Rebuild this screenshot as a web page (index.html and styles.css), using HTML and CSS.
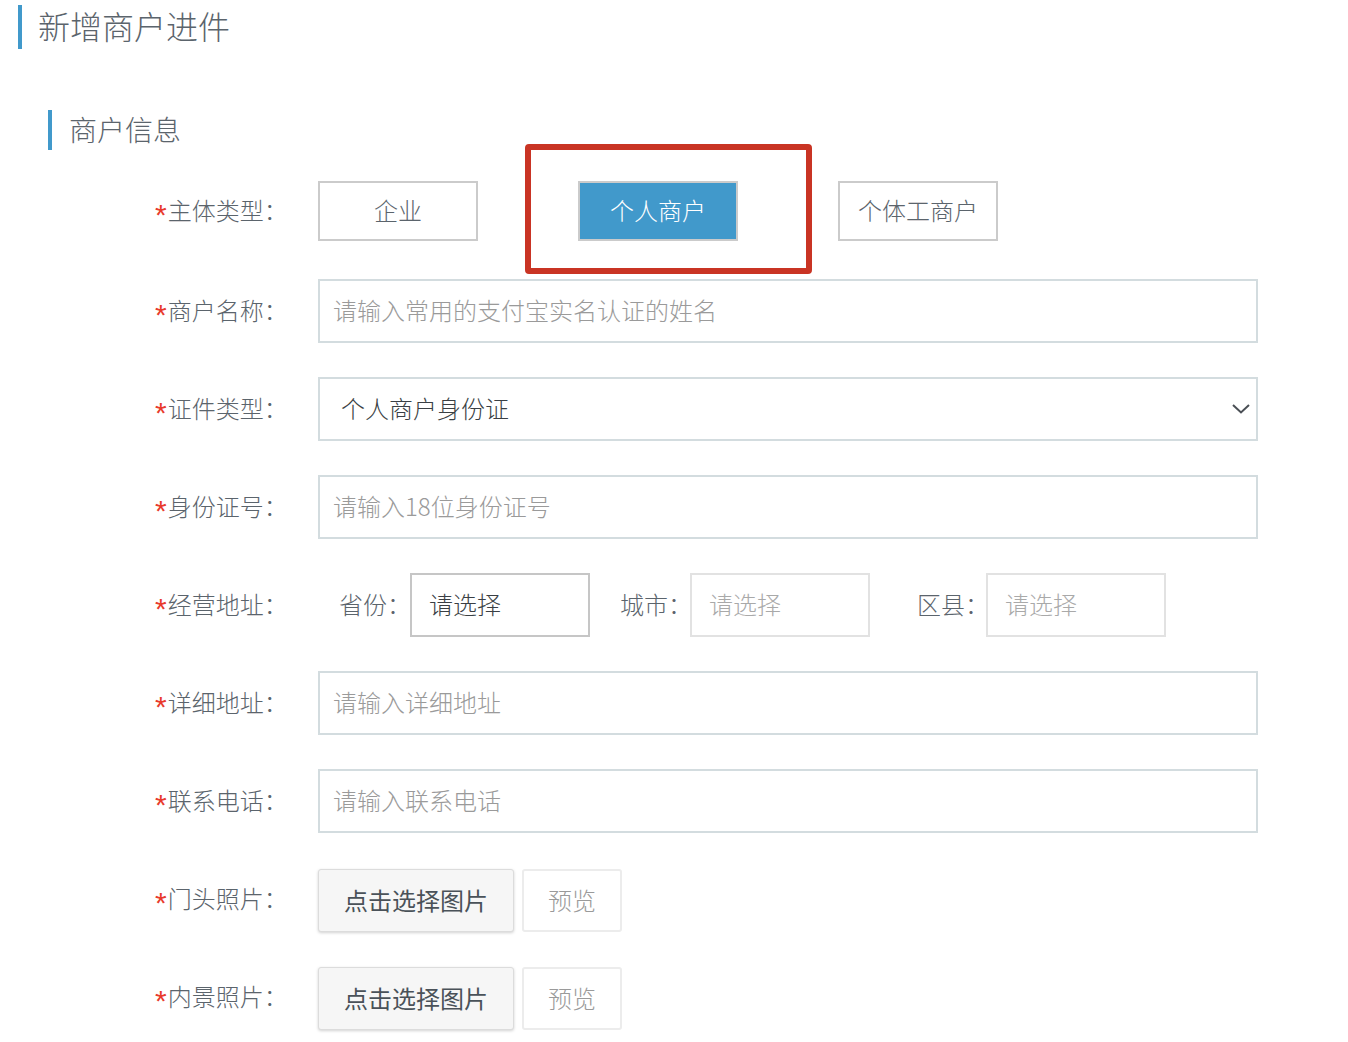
FILE: index.html
```html
<!DOCTYPE html>
<html lang="zh-CN">
<head>
<meta charset="utf-8">
<title>新增商户进件</title>
<link rel="stylesheet" href="styles.css">
</head>
<body>
<div class="page">
  <h1 class="page-title">新增商户进件</h1>
  <h2 class="section-title">商户信息</h2>
  <form class="form">
    <div class="annot"></div>
    <div class="row row-type">
      <label class="label"><span class="req">*</span>主体类型：</label>
      <div class="field type-btns">
        <button type="button" class="type-btn">企业</button>
        <button type="button" class="type-btn active">个人商户</button>
        <button type="button" class="type-btn">个体工商户</button>
      </div>
    </div>
    <div class="row">
      <label class="label"><span class="req">*</span>商户名称：</label>
      <div class="field"><div class="input placeholder">请输入常用的支付宝实名认证的姓名</div></div>
    </div>
    <div class="row">
      <label class="label"><span class="req">*</span>证件类型：</label>
      <div class="field">
        <div class="input select">
          <span>个人商户身份证</span>
          <svg class="chev" width="18" height="10" viewBox="0 0 18 10"><path d="M1 1 L9 8.5 L17 1" fill="none" stroke="#4a4f55" stroke-width="2"/></svg>
        </div>
      </div>
    </div>
    <div class="row">
      <label class="label"><span class="req">*</span>身份证号：</label>
      <div class="field"><div class="input placeholder">请输入18位身份证号</div></div>
    </div>
    <div class="row">
      <label class="label"><span class="req">*</span>经营地址：</label>
      <div class="field addr">
        <div class="addr-group g1"><span class="addr-label">省份：</span><div class="addr-box filled">请选择</div></div>
        <div class="addr-group g2"><span class="addr-label">城市：</span><div class="addr-box">请选择</div></div>
        <div class="addr-group g3"><span class="addr-label">区县：</span><div class="addr-box">请选择</div></div>
      </div>
    </div>
    <div class="row">
      <label class="label"><span class="req">*</span>详细地址：</label>
      <div class="field"><div class="input placeholder">请输入详细地址</div></div>
    </div>
    <div class="row">
      <label class="label"><span class="req">*</span>联系电话：</label>
      <div class="field"><div class="input placeholder">请输入联系电话</div></div>
    </div>
    <div class="row row-upload">
      <label class="label"><span class="req">*</span>门头照片：</label>
      <div class="field uploads">
        <button type="button" class="upload-btn">点击选择图片</button>
        <button type="button" class="preview-btn">预览</button>
      </div>
    </div>
    <div class="row row-upload">
      <label class="label"><span class="req">*</span>内景照片：</label>
      <div class="field uploads">
        <button type="button" class="upload-btn">点击选择图片</button>
        <button type="button" class="preview-btn">预览</button>
      </div>
    </div>
  </form>
</div>
</body>
</html>
```
FILE: styles.css
```css
* { box-sizing: border-box; }
html, body { margin: 0; padding: 0; background: #fff; }
body {
  font-family: "Noto Sans CJK SC", "Noto Sans", sans-serif;
  font-weight: 300;
  color: #5b646c;
}
.page { padding: 5px 0 0 18px; }
.page-title {
  margin: 0;
  border-left: 4px solid #4199cb;
  padding-left: 16px;
  height: 44px;
  line-height: 40px;
  font-size: 32px;
  font-weight: 300;
  color: #5b646c;
}
.section-title {
  margin: 61px 0 0 30px;
  border-left: 4px solid #4199cb;
  padding-left: 17px;
  height: 40px;
  line-height: 38px;
  font-size: 28px;
  font-weight: 300;
  color: #5b646c;
}
.form {
  position: relative;
  margin: 31px 0 0 0;
  padding-left: 137px;
}
.annot {
  position: absolute;
  left: 507px;
  top: -37px;
  width: 287px;
  height: 130px;
  border: 6px solid #c93424;
  border-radius: 4px;
  pointer-events: none;
}
.row {
  display: flex;
  align-items: center;
  height: 64px;
  margin-bottom: 34px;
}
.row-type { height: 60px; margin-bottom: 38px; }
.label {
  width: 163px;
  font-size: 24px;
  line-height: 30px;
  color: #5b646c;
  white-space: nowrap;
  padding-bottom: 3px;
}
.req {
  color: #e83a2c;
  font-family: "Liberation Sans", sans-serif;
  font-weight: 400;
  font-size: 30px;
  line-height: 0;
  vertical-align: -5px;
  margin-right: 1px;
}
.field { width: 940px; height: 100%; }
.type-btns { display: flex; gap: 100px; }
.type-btn {
  width: 160px;
  height: 60px;
  border: 2px solid #cbcbcb;
  background: #fff;
  font-family: inherit;
  font-weight: 300;
  font-size: 24px;
  color: #5b646c;
  padding: 0 0 3px 0;
}
.type-btn.active {
  background: #4199cb;
  color: #fff;
}
.input {
  height: 64px;
  border: 2px solid #d3dcdf;
  padding: 0 0 3px 13px;
  display: flex;
  align-items: center;
  font-size: 24px;
}
.placeholder { color: #9a9a9a; }
.select {
  padding-left: 21px;
  padding-right: 6px;
  justify-content: space-between;
  color: #3a3f44;
}
.chev { margin-top: 3px; }
.addr { display: flex; align-items: center; }
.addr-group { display: flex; align-items: center; height: 64px; }
.g1 { margin-left: 21px; }
.g2 { margin-left: 30px; }
.g3 { margin-left: 47px; }
.addr-label {
  font-size: 24px;
  color: #5b646c;
  width: 71px;
  white-space: nowrap;
  padding-bottom: 3px;
}
.g2 .addr-label { width: 70px; }
.g3 .addr-label { width: 69px; }
.addr-box {
  width: 180px;
  height: 64px;
  border: 2px solid #e2e2e2;
  padding: 0 0 3px 17px;
  display: flex;
  align-items: center;
  font-size: 24px;
  color: #a9a9a9;
}
.addr-box.filled { border-color: #c6c6c6; color: #3a3f44; }
.uploads { display: flex; gap: 8px; align-items: flex-start; padding-top: 2px; }
.upload-btn {
  width: 196px;
  height: 63px;
  border: 1px solid #dcdcdc;
  border-radius: 3px;
  background: #f6f6f6;
  box-shadow: 0 1px 3px rgba(0,0,0,0.18);
  font-family: inherit;
  font-size: 24px;
  font-weight: 400;
  color: #4a5259;
  padding: 0 0 3px 0;
}
.preview-btn {
  width: 100px;
  height: 63px;
  border: 2px solid #ececec;
  border-radius: 3px;
  background: #fff;
  font-family: inherit;
  font-weight: 300;
  font-size: 24px;
  color: #9a9a9a;
  padding: 0 0 3px 0;
}
```
